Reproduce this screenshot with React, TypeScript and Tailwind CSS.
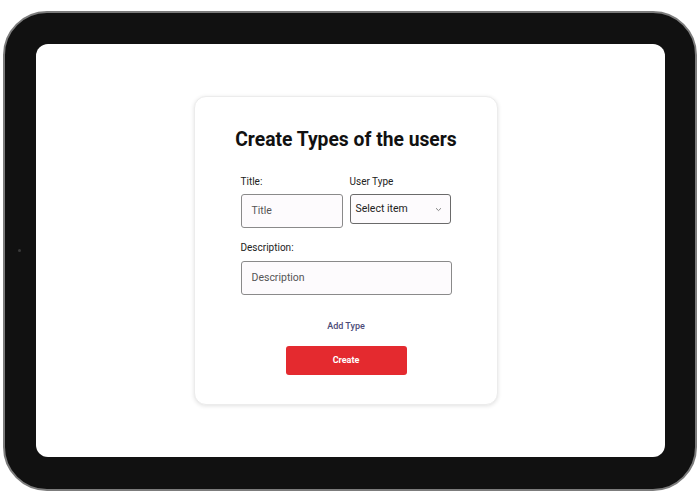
import React from "react";

export default function App() {
  return (
    <div className="w-[700px] h-[500px] bg-white pt-[11px] px-[3px] font-['Roboto',sans-serif]">
      <div className="relative w-[694px] h-[480px] rounded-[44px] bg-[#111111] border-2 border-[#7c7c7c] p-[31px]">
        <div className="absolute left-[13px] top-[236px] w-[3px] h-[3px] rounded-full bg-[#3a3a3a]" />
        <div className="w-[629px] h-[413px] rounded-[12px] bg-white pt-[52px] pl-[158px]">
          <div className="w-[304px] h-[309px] rounded-[12px] border border-[#ececec] bg-white shadow-[0_1px_4px_rgba(0,0,0,0.12)] flex flex-col items-center">
            <div className="mt-[31px] text-[19.3px] leading-[24px] font-bold text-[#111]">
              Create Types of the users
            </div>
            <div className="w-[211px] mt-[24px] flex gap-[7px]">
              <div className="w-[102px] flex flex-col">
                <div className="text-[10px] leading-[12px] text-[#222]">Title:</div>
                <div className="mt-[6px] h-[34px] rounded-[3px] border border-[#8a8a8a] bg-[#fdfbfd] flex items-center pl-[10px] text-[10.5px] text-[#555]">
                  Title
                </div>
              </div>
              <div className="w-[101px] flex flex-col">
                <div className="text-[10px] leading-[12px] text-[#222]">User Type</div>
                <div className="mt-[6px] h-[30px] rounded-[3px] border border-[#6a6a6a] bg-[#fdfbfd] flex items-center justify-between pl-[5px] pr-[8px] text-[10.5px] text-[#222]">
                  <span>Select item</span>
                  <svg width="7" height="5" viewBox="0 0 7 5" fill="none">
                    <path d="M1 1.2L3.5 3.6L6 1.2" stroke="#777" strokeWidth="0.9" />
                  </svg>
                </div>
              </div>
            </div>
            <div className="w-[211px] mt-[14px] flex flex-col">
              <div className="text-[10px] leading-[12px] text-[#222]">Description:</div>
              <div className="mt-[7px] h-[34px] rounded-[3px] border border-[#8a8a8a] bg-[#fdfbfd] flex items-center pl-[10px] text-[10.5px] text-[#555]">
                Description
              </div>
            </div>
            <div className="mt-[26px] text-[9px] leading-[11px] font-medium text-[#4b4b78]">Add Type</div>
            <div className="mt-[14px] w-[121px] h-[29px] rounded-[3px] bg-[#e42a2f] flex items-center justify-center pt-[1px] text-[9px] font-bold text-white">
              Create
            </div>
          </div>
        </div>
      </div>
    </div>
  );
}
